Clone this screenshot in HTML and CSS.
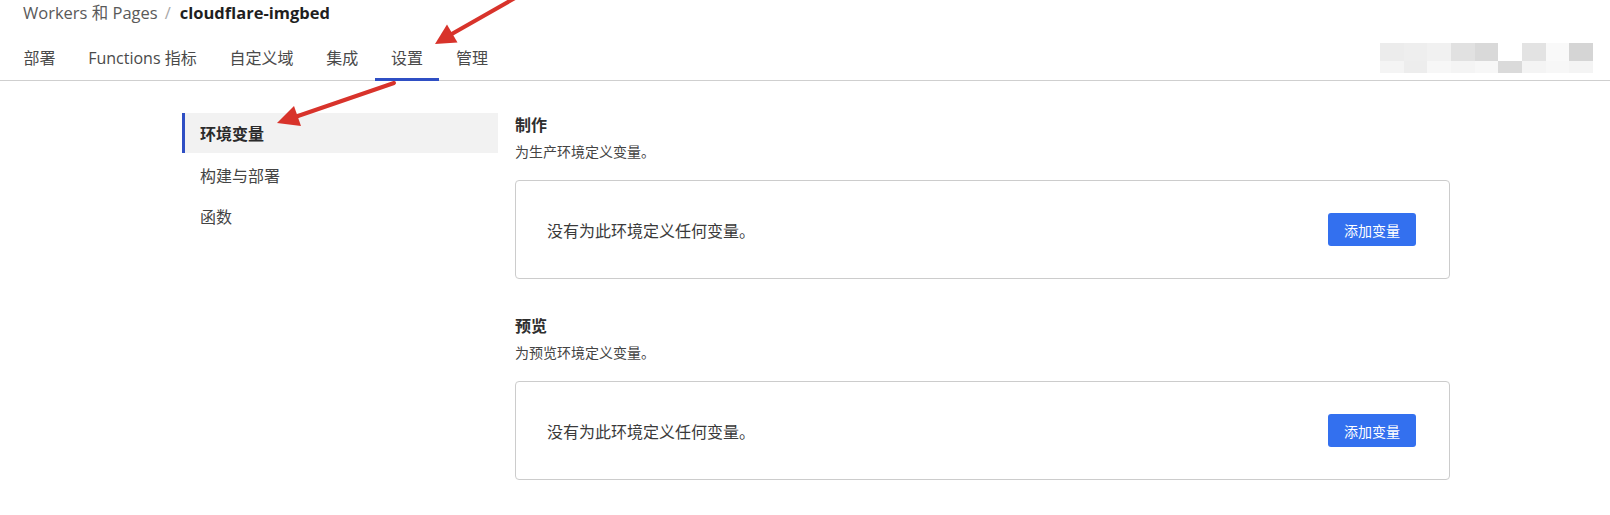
FILE: index.html
```html
<!DOCTYPE html>
<html lang="zh-CN">
<head>
<meta charset="utf-8">
<title>cloudflare-imgbed 设置</title>
<link rel="stylesheet" href="styles.css">
</head>
<body>
<header class="header">
  <div class="crumbs">
    <span class="crumb-link">Workers 和 Pages</span>
    <span class="crumb-sep">/</span>
    <span class="crumb-current">cloudflare-imgbed</span>
  </div>
  <nav class="tabbar">
    <div class="tabs">
      <span class="tab">部署</span>
      <span class="tab">Functions 指标</span>
      <span class="tab">自定义域</span>
      <span class="tab">集成</span>
      <span class="tab active">设置</span>
      <span class="tab">管理</span>
    </div>
    <div class="mosaic">
      <i class="m0"></i><i class="m1"></i><i class="m2"></i><i class="m3"></i><i class="m4"></i><i class="m0w"></i><i class="m5"></i><i class="m6"></i><i class="m7"></i>
      <i class="n0"></i><i class="n1"></i><i class="n2"></i><i class="n0"></i><i class="n2"></i><i class="n3"></i><i class="n0"></i><i class="n2"></i><i class="n0"></i>
    </div>
  </nav>
</header>

<div class="layout">
  <aside class="sidebar">
    <div class="side-item active">环境变量</div>
    <div class="side-item">构建与部署</div>
    <div class="side-item">函数</div>
  </aside>
  <main class="main">
    <section class="section">
      <h2 class="sec-title">制作</h2>
      <p class="sec-desc">为生产环境定义变量。</p>
      <div class="card">
        <span class="card-text">没有为此环境定义任何变量。</span>
        <button class="btn">添加变量</button>
      </div>
    </section>
    <section class="section">
      <h2 class="sec-title">预览</h2>
      <p class="sec-desc">为预览环境定义变量。</p>
      <div class="card">
        <span class="card-text">没有为此环境定义任何变量。</span>
        <button class="btn">添加变量</button>
      </div>
    </section>
  </main>
</div>

<svg class="annotations" width="1610" height="515" viewBox="0 0 1610 515" aria-hidden="true">
  <line x1="522" y1="-6" x2="450" y2="35" class="arrow-line"/>
  <polygon points="435,44 457.5,42.5 447,24.5" class="arrow-head"/>
  <line x1="394" y1="83" x2="295" y2="117" class="arrow-line"/>
  <polygon points="277,123 301,126 294,106" class="arrow-head"/>
</svg>
</body>
</html>
```

FILE: styles.css
```css
* { box-sizing: border-box; }

html, body {
  margin: 0;
  padding: 0;
  background: #ffffff;
}

body {
  position: relative;
  width: 1610px;
  height: 515px;
  overflow: hidden;
  font-family: "Open Sans", "Noto Sans CJK SC", sans-serif;
  color: #333333;
}

.header {
  display: flex;
  flex-direction: column;
}

.crumbs {
  display: flex;
  align-items: center;
  height: 26px;
  padding-left: 23px;
  font-size: 16.5px;
  line-height: 24px;
}

.crumb-link { color: #5a5a5a; }
.crumb-sep { color: #a8a8a8; padding: 0 9px 0 7px; }
.crumb-current { color: #1f1f1f; font-weight: 700; }

.tabbar {
  display: flex;
  justify-content: space-between;
  align-items: flex-end;
  margin-top: 10px;
  height: 45px;
  border-bottom: 1px solid #cfcfcf;
}

.tabs {
  display: flex;
  padding-left: 7px;
  height: 100%;
}

.tab {
  display: flex;
  align-items: center;
  padding: 0 16.4px 2px;
  font-size: 16px;
  color: #4a4a4a;
  border-bottom: 2px solid transparent;
  margin-bottom: -1px;
}

.tab.active {
  border-bottom: 3px solid #2f4fc4;
  padding-bottom: 1px;
}

.mosaic {
  display: grid;
  grid-template-columns: repeat(9, 23.7px);
  grid-template-rows: 18px 12px;
  margin-right: 17px;
  margin-bottom: 7px;
}

.mosaic i { display: block; }
.m0 { background: #ececec; }
.m1 { background: #eeeeee; }
.m2 { background: #f1f1f1; }
.m3 { background: #e1e1e1; }
.m4 { background: #d9d9d9; }
.m0w { background: #ffffff; }
.m5 { background: #e3e3e3; }
.m6 { background: #f9f9f9; }
.m7 { background: #d5d5d5; }
.n0 { background: #f4f4f4; }
.n1 { background: #ededed; }
.n2 { background: #f7f7f7; }
.n3 { background: #dadada; }

.layout {
  display: flex;
  padding-left: 182px;
  padding-top: 32px;
}

.sidebar {
  width: 316px;
  flex: none;
  margin-right: 17px;
  display: flex;
  flex-direction: column;
}

.side-item {
  height: 41px;
  display: flex;
  align-items: center;
  padding-left: 15px;
  font-size: 16px;
  color: #444444;
  border-left: 3px solid transparent;
}

.side-item.active {
  height: 40px;
  margin-bottom: 1px;
  background: #f2f2f2;
  border-left-color: #2f4fc4;
  font-weight: 700;
  color: #2b2b2b;
}

.main {
  width: 935px;
  flex: none;
  display: flex;
  flex-direction: column;
  gap: 35px;
}

.section {
  display: flex;
  flex-direction: column;
}

.sec-title {
  margin: 0;
  font-size: 16px;
  font-weight: 700;
  line-height: 24px;
  color: #2e2e2e;
}

.sec-desc {
  margin: 5px 0 0;
  font-size: 14px;
  line-height: 20px;
  color: #444444;
}

.card {
  margin-top: 18px;
  height: 99px;
  border: 1px solid #cccccc;
  border-radius: 4px;
  display: flex;
  align-items: center;
  justify-content: space-between;
  padding: 0 33px 0 31px;
}

.card-text {
  font-size: 16px;
  color: #3a3a3a;
}

.btn {
  width: 88px;
  height: 33px;
  border: none;
  border-radius: 3px;
  background: #3370ef;
  color: #ffffff;
  font-family: "Open Sans", "Noto Sans CJK SC", sans-serif;
  font-size: 14px;
  padding: 0;
}

.annotations {
  position: absolute;
  left: 0;
  top: 0;
  pointer-events: none;
}

.arrow-line {
  stroke: #d8332b;
  stroke-width: 4;
  stroke-linecap: round;
}

.arrow-head {
  fill: #d8332b;
}
```
